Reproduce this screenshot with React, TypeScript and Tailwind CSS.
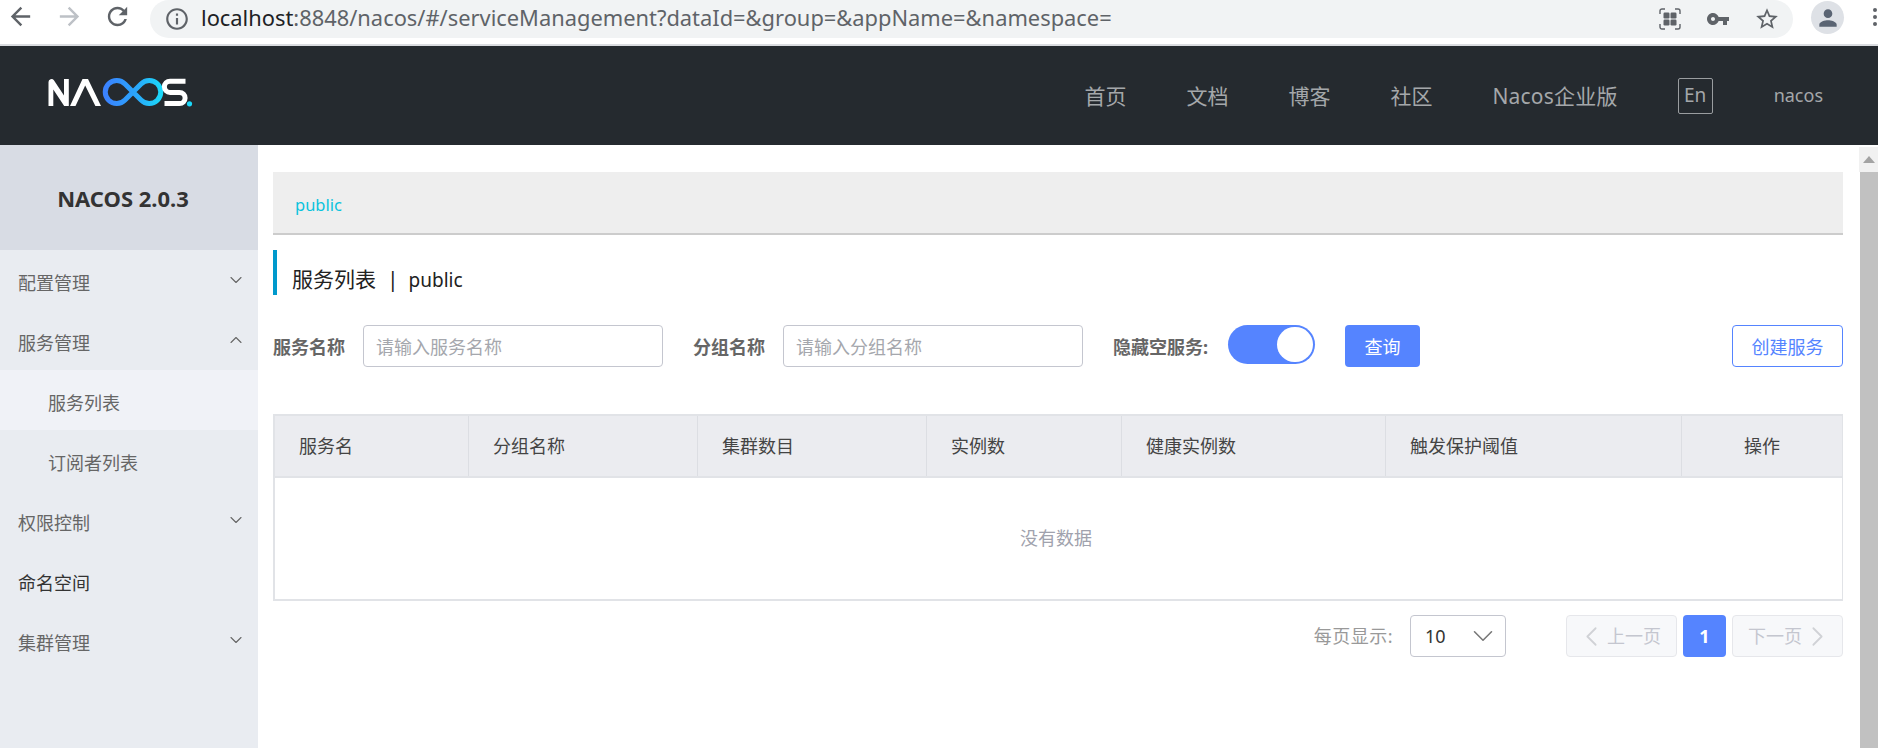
import { ChevronDown, ChevronUp, ChevronLeft, ChevronRight } from 'lucide-react'

const FONT = 'font-["Noto_Sans","Noto_Sans_CJK_SC",sans-serif]'

const NAV = ['首页', '文档', '博客', '社区']

const MENU = [
  { label: '配置管理', icon: 'down' },
  { label: '服务管理', icon: 'up' },
  { label: '服务列表', nested: true, active: true },
  { label: '订阅者列表', nested: true },
  { label: '权限控制', icon: 'down' },
  { label: '命名空间', dark: true },
  { label: '集群管理', icon: 'down' },
]

const COLUMNS = ['服务名', '分组名称', '集群数目', '实例数', '健康实例数', '触发保护阈值']

function ChromeIcon({ d, className }: { d: string; className: string }) {
  return (
    <svg viewBox="0 0 24 24" className={className} fill="currentColor">
      <path d={d} />
    </svg>
  )
}

function BrowserBar() {
  return (
    <div className="flex h-[46px] shrink-0 border-b-2 border-[#dadce0] bg-white">
      <div className="flex h-[44px] w-[150px] shrink-0 items-start pl-[6px] pt-[2px]">
        <ChromeIcon className="h-[29px] w-[29px] text-[#5f6368]" d="M20 11H7.83l5.59-5.59L12 4l-8 8 8 8 1.41-1.41L7.83 13H20v-2z" />
        <ChromeIcon className="ml-[20px] h-[29px] w-[29px] text-[#bdc1c6]" d="M12 4l-1.41 1.41L16.17 11H4v2h12.17l-5.58 5.59L12 20l8-8z" />
        <ChromeIcon className="ml-[19px] h-[29px] w-[29px] text-[#5f6368]" d="M17.65 6.35C16.2 4.9 14.21 4 12 4c-4.42 0-7.99 3.58-7.99 8s3.57 8 7.99 8c3.73 0 6.84-2.55 7.73-6h-2.08c-.82 2.33-3.04 4-5.65 4-3.31 0-6-2.69-6-6s2.69-6 6-6c1.66 0 3.14.69 4.22 1.78L13 11h7V4l-2.35 2.35z" />
      </div>
      <div className="flex h-[38px] w-[1643px] shrink-0 items-center rounded-full bg-[#f1f3f4]">
        <ChromeIcon className="ml-[14px] h-[26px] w-[26px] text-[#5f6368]" d="M11 7h2v2h-2zm0 4h2v6h-2zm1-9C6.48 2 2 6.48 2 12s4.48 10 10 10 10-4.48 10-10S17.52 2 12 2zm0 18c-4.41 0-8-3.59-8-8s3.59-8 8-8 8 3.59 8 8-3.59 8-8 8z" />
        <div className="-mt-[1px] ml-[11px] whitespace-nowrap text-[21.86px] text-[#5f6368]">
          <span className="text-[#202124]">localhost</span>:8848/nacos/#/serviceManagement?dataId=&amp;group=&amp;appName=&amp;namespace=
        </div>
        <div className="ml-auto flex items-center">
          <svg viewBox="0 0 22 22" className="h-[22px] w-[22px] text-[#5f6368]" fill="none" stroke="currentColor" strokeWidth="1.4">
            <path d="M1 6V3a2 2 0 0 1 2-2h3M16 1h3a2 2 0 0 1 2 2v3M21 16v3a2 2 0 0 1-2 2h-3M6 21H3a2 2 0 0 1-2-2v-3" />
            <rect x="4.5" y="4.5" width="6" height="6" rx="1.2" fill="currentColor" stroke="none" />
            <rect x="11.5" y="4.5" width="6" height="6" rx="1.2" fill="currentColor" stroke="none" />
            <rect x="4.5" y="11.5" width="6" height="6" rx="1.2" fill="currentColor" stroke="none" />
            <rect x="11.5" y="11.5" width="6" height="6" rx="1.2" fill="currentColor" stroke="none" />
          </svg>
          <ChromeIcon className="ml-[25px] h-[24px] w-[24px] text-[#5f6368]" d="M12.65 10C11.83 7.67 9.61 6 7 6c-3.31 0-6 2.69-6 6s2.69 6 6 6c2.61 0 4.83-1.67 5.65-4H17v4h4v-4h2v-4H12.65zM7 14c-1.1 0-2-.9-2-2s.9-2 2-2 2 .9 2 2-.9 2-2 2z" />
          <ChromeIcon className="ml-[24px] mr-[13px] h-[26px] w-[26px] text-[#5f6368]" d="M22 9.24l-7.19-.62L12 2 9.19 8.63 2 9.24l5.46 4.73L5.82 21 12 17.27 18.18 21l-1.63-7.03L22 9.24zM12 15.4l-3.76 2.27 1-4.28-3.32-2.88 4.38-.38L12 6.1l1.71 4.04 4.38.38-3.32 2.88 1 4.28L12 15.4z" />
        </div>
      </div>
      <div className="flex h-[44px] flex-1 items-start">
        <div className="ml-[18px] mt-[1px] flex h-[33px] w-[33px] shrink-0 items-center justify-center rounded-full bg-[#dee1e6]">
          <ChromeIcon className="h-[26px] w-[26px] text-[#5a6473]" d="M12 12c2.21 0 4-1.79 4-4s-1.79-4-4-4-4 1.79-4 4 1.79 4 4 4zm0 2c-2.67 0-8 1.34-8 4v2h16v-2c0-2.66-5.33-4-8-4z" />
        </div>
        <div className="ml-[29px] mt-[8px] flex shrink-0 flex-col gap-[3px]">
          <span className="h-[4px] w-[4px] rounded-full bg-[#5f6368]" />
          <span className="h-[4px] w-[4px] rounded-full bg-[#5f6368]" />
          <span className="h-[4px] w-[4px] rounded-full bg-[#5f6368]" />
        </div>
      </div>
    </div>
  )
}

function Logo() {
  return (
    <svg viewBox="0 0 146 30" className="h-[30px] w-[146px]" fill="none" strokeWidth="5">
      <defs>
        <linearGradient id="loop" x1="0" y1="0" x2="1" y2="0">
          <stop offset="0" stopColor="#3b82ff" />
          <stop offset="0.55" stopColor="#2aa6fb" />
          <stop offset="1" stopColor="#1bd8f9" />
        </linearGradient>
      </defs>
      <path d="M1.5 28V4a3 3 0 0 1 5.4-1.8L17 17.5V1h4.8v27h-4.6L6.3 11.5V28z" fill="#fff" />
      <path d="M23 28L35.5 1H41L54 28H48.4L38.2 7.5L28.5 28z" fill="#fff" />
      <path d="M78 22A11.5 11.5 0 1 1 78 6L94 22A11.5 11.5 0 1 0 94 6L78 22" stroke="url(#loop)" />
      <path d="M138.5 3.2H123a5.6 5.6 0 0 0 0 11.2h9.5a5.6 5.6 0 0 1 0 11.2H117.5" stroke="#fff" />
      <circle cx="142.5" cy="25.8" r="2.6" fill="#1bd8f9" />
    </svg>
  )
}

function Header() {
  return (
    <header className="flex h-[99px] shrink-0 items-center bg-[#252a2f] pl-[47px] pr-[55px]">
      <div className="mb-[5px]">
        <Logo />
      </div>
      <nav className="ml-auto flex items-center gap-[60px] text-[21px] text-[#a4a7aa]">
        {NAV.map((item) => (
          <span key={item} className="mt-[2px]">{item}</span>
        ))}
        <span className="mt-[2px] tracking-[0.2px]">Nacos企业版</span>
        <span className="flex h-[36px] w-[35px] items-center justify-center rounded-[2px] border border-[#9a9da0] text-[19px]">En</span>
        <span className="ml-[1px] text-[18px]">nacos</span>
      </nav>
    </header>
  )
}

function Sidebar() {
  return (
    <aside className="w-[258px] shrink-0 bg-[#e9ecf1]">
      <div className="flex h-[105px] items-center justify-center bg-[#d8dce4] pr-[12px] pt-[2px] text-[22px] font-bold text-[#333]">
        NACOS 2.0.3
      </div>
      {MENU.map((item) => (
        <div
          key={item.label}
          className={`flex h-[60px] items-center pt-[6px] text-[18px] ${item.nested ? 'pl-[48px]' : 'pl-[18px]'} ${item.active ? 'bg-[#f0f2f7]' : ''} ${item.dark ? 'text-[#333]' : 'text-[#666]'}`}
        >
          <span>{item.label}</span>
          {item.icon === 'down' && <ChevronDown className="ml-auto mr-[12px] -mt-[7px] h-[20px] w-[20px] text-[#666]" strokeWidth={1.3} />}
          {item.icon === 'up' && <ChevronUp className="ml-auto mr-[12px] -mt-[7px] h-[20px] w-[20px] text-[#666]" strokeWidth={1.3} />}
        </div>
      ))}
    </aside>
  )
}

function Toolbar() {
  return (
    <div className="mt-[30px] flex items-start text-[18px]">
      <div className="flex h-[42px] w-[90px] shrink-0 items-center pt-[2px] font-bold text-[#666]">服务名称</div>
      <div className="flex h-[42px] w-[300px] shrink-0 items-center rounded-[4px] border border-[#c4c6cf] pl-[12px] pt-[2px] text-[#a5a7ad]">请输入服务名称</div>
      <div className="ml-[30px] flex h-[42px] w-[90px] shrink-0 items-center pt-[2px] font-bold text-[#666]">分组名称</div>
      <div className="flex h-[42px] w-[300px] shrink-0 items-center rounded-[4px] border border-[#c4c6cf] pl-[12px] pt-[2px] text-[#a5a7ad]">请输入分组名称</div>
      <div className="ml-[30px] flex h-[42px] w-[115px] shrink-0 items-center pt-[2px] font-bold text-[#666]">隐藏空服务:</div>
      <div className="flex h-[39px] w-[87px] shrink-0 items-center justify-end rounded-full bg-[#5584ff] pr-[2px]">
        <span className="h-[35px] w-[36px] rounded-full bg-white" />
      </div>
      <div className="ml-[30px] flex h-[42px] w-[75px] shrink-0 items-center justify-center rounded-[4px] bg-[#5584ff] pt-[2px] text-white">查询</div>
      <div className="ml-auto flex h-[42px] w-[111px] shrink-0 items-center justify-center rounded-[4px] border border-[#5584ff] pt-[2px] text-[#5584ff]">创建服务</div>
    </div>
  )
}

function ServiceTable() {
  return (
    <div className="mt-[47px] h-[187px] border-2 border-r border-[#e1e3e7] text-[18px]">
      <div className="grid h-[62px] grid-cols-[194px_229px_229px_195px_264px_296px_1fr] border-b-2 border-[#e1e3e7] bg-[#ebecf0] text-[#444]">
        {COLUMNS.map((col) => (
          <div key={col} className="flex items-center border-r border-[#dcdee3] pl-[24px]">{col}</div>
        ))}
        <div className="flex items-center justify-center">操作</div>
      </div>
      <div className="flex h-[119px] items-center justify-center pr-[5px] pt-[2px] text-[#a0a2ad]">没有数据</div>
    </div>
  )
}

function Pager() {
  return (
    <div className="mt-[14px] flex items-center justify-end text-[18px]">
      <span className="mt-[1px] tracking-[0.5px] text-[#999]">每页显示:</span>
      <div className="ml-[17px] flex h-[42px] w-[96px] items-center rounded-[4px] border border-[#c4c6cf] pl-[14px] text-[#333]">
        10
        <ChevronDown className="ml-auto mr-[5px] h-[34px] w-[34px] text-[#777]" strokeWidth={1.1} />
      </div>
      <div className="ml-[60px] flex h-[42px] w-[111px] items-center justify-center rounded-[4px] border border-[#e6e7eb] bg-[#f7f8fa] text-[#c4c6cf]">
        <ChevronLeft className="-ml-[7px] -mr-[1px] h-[33px] w-[33px] text-[#d0d2d6]" strokeWidth={1.3} />
        上一页
      </div>
      <div className="ml-[6px] flex h-[42px] w-[43px] items-center justify-center rounded-[4px] bg-[#5584ff] font-bold text-white">1</div>
      <div className="ml-[6px] flex h-[42px] w-[111px] items-center justify-center rounded-[4px] border border-[#e6e7eb] bg-[#f7f8fa] text-[#c4c6cf]">
        下一页
        <ChevronRight className="-ml-[1px] -mr-[7px] h-[33px] w-[33px] text-[#d0d2d6]" strokeWidth={1.3} />
      </div>
    </div>
  )
}

export default function App() {
  return (
    <div className={`flex h-[748px] w-[1878px] flex-col overflow-hidden bg-white ${FONT}`}>
      <BrowserBar />
      <Header />
      <div className="flex min-h-0 flex-1">
        <Sidebar />
        <main className="min-w-0 flex-1 pl-[15px] pr-[16px] pt-[27px]">
          <div className="flex h-[63px] items-center border-b-2 border-[#ccc] bg-[#eee] pl-[22px] pt-[6px] text-[16.5px] text-[#0ac3dd]">public</div>
          <div className="mt-[15px] flex h-[45px] items-center border-l-4 border-[#09c] pl-[15px] pt-[15px] text-[21px] text-[#222]">
            服务列表<span className="ml-[11px] mr-[10px]">|</span><span className="text-[19px]">public</span>
          </div>
          <Toolbar />
          <ServiceTable />
          <Pager />
        </main>
        <div className="flex w-[19px] shrink-0 flex-col">
          <div className="mt-[2px] flex h-[25px] items-center justify-center bg-[#f1f1f1]">
            <svg viewBox="0 0 12 7" className="h-[7px] w-[12px]" fill="#a3a3a3"><path d="M6 0L12 7H0z" /></svg>
          </div>
          <div className="ml-[1px] flex-1 bg-[#c1c1c1]" />
        </div>
      </div>
    </div>
  )
}
